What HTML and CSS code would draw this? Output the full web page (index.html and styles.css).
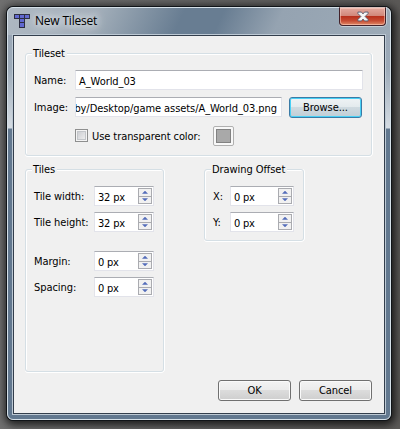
FILE: index.html
```html
<!DOCTYPE html>
<html lang="en">
<head>
<meta charset="utf-8">
<title>New Tileset</title>
<link rel="stylesheet" href="styles.css">
</head>
<body>
<div class="window">
  <header class="titlebar">
    <svg class="app-icon" width="16" height="14" viewBox="0 0 16 14" shape-rendering="crispEdges">
      <path d="M0 0h16v5h-5v9H5V5H0z" fill="#2b2d40"/>
      <path d="M1 1h4v3H1zM6 1h4v3H6zM11 1h4v3h-4zM6 5h4v3H6zM6 9h4v4H6z" fill="#6068d0"/>
    </svg>
    <h1 class="title">New Tileset</h1>
    <button class="close" aria-label="Close">
      <svg width="12" height="11" viewBox="0 0 13 11"><path d="M1 .7h3.8l1.7 2 1.7-2H12v1.6L8.8 5.5 12 8.7v1.6H8.2l-1.7-2-1.7 2H1V8.7l3.2-3.2L1 2.3z" fill="#f5f5f5" stroke="#565b70"/></svg>
    </button>
  </header>
  <main class="client">
    <fieldset class="group tileset">
      <legend>Tileset</legend>
      <div class="row name-row"><label>Name:</label><div class="field">A_World_03</div></div>
      <div class="row image-row"><label>Image:</label><div class="field path"><span>by/Desktop/game assets/A_World_03.png</span></div><button class="button focused">Browse...</button></div>
      <div class="row color-row"><span class="checkbox"></span><span class="check-label">Use transparent color:</span><span class="color-button"><i></i></span></div>
    </fieldset>
    <div class="columns">
      <fieldset class="group tiles">
        <legend>Tiles</legend>
        <div class="row"><label>Tile width:</label><div class="spin"><span>32 px</span><div class="steps"><i class="up"></i><i class="down"></i></div></div></div>
        <div class="row"><label>Tile height:</label><div class="spin"><span>32 px</span><div class="steps"><i class="up"></i><i class="down"></i></div></div></div>
        <div class="row apart"><label>Margin:</label><div class="spin"><span>0 px</span><div class="steps"><i class="up"></i><i class="down"></i></div></div></div>
        <div class="row"><label>Spacing:</label><div class="spin"><span>0 px</span><div class="steps"><i class="up"></i><i class="down"></i></div></div></div>
      </fieldset>
      <fieldset class="group offset">
        <legend>Drawing Offset</legend>
        <div class="row"><label>X:</label><div class="spin"><span>0 px</span><div class="steps"><i class="up"></i><i class="down"></i></div></div></div>
        <div class="row"><label>Y:</label><div class="spin"><span>0 px</span><div class="steps"><i class="up"></i><i class="down"></i></div></div></div>
      </fieldset>
    </div>
    <footer class="actions"><button class="button">OK</button><button class="button">Cancel</button></footer>
  </main>
</div>
</body>
</html>
```

FILE: styles.css
```css
* { box-sizing: border-box; }
body {
  margin: 0;
  padding: 7px 9px 9px 7px;
  width: 400px;
  height: 429px;
  overflow: hidden;
  background: linear-gradient(90deg, #707070, #646464 50%, #5b5957);
  font: 11px/14px "DejaVu Sans Condensed", "DejaVu Sans", sans-serif;
  font-stretch: condensed;
  letter-spacing: -0.07px;
  color: #000;
}
.window {
  width: 384px;
  height: 413px;
  border: 1px solid #d5e0e8;
  border-radius: 6px;
  padding: 0 4px 4px;
  background:
    linear-gradient(180deg, transparent 27px, #9aa7b6 27px, #9caab8 60px, #d5dce3 120px, #62788f 121px),
    linear-gradient(115deg, #aeb8c2 0, #a3afba 23%, #687d92 45%, #687d92 55%, #95a3b1 70%, #9caab7 100%) 0 0 / 100% 28px;
  box-shadow: 0 0 0 1px #101418, 1px 2px 9px 3px rgba(0, 0, 0, .75);
}
.titlebar {
  height: 26px;
  display: flex;
  align-items: flex-start;
}
.app-icon { margin: 6px 0 0 2px; }
.title {
  margin: 5px 0 0 5px;
  font: 12px/16px "Open Sans", sans-serif;
  letter-spacing: -0.2px;
  text-shadow: 0 0 6px #e0e6ea, 0 0 9px #e0e6ea, 0 0 14px #e0e6ea;
}
.close {
  margin: -1px 0 0 auto;
  width: 47px;
  height: 19px;
  padding: 0 0 1px;
  display: flex;
  align-items: center;
  justify-content: center;
  border: 1px solid #43222a;
  border-top-color: #d9c0bc;
  border-radius: 0 0 4px 4px;
  background: linear-gradient(#e3a99e 0, #d08578 48%, #b8311d 50%, #c64b32 75%, #e08a68 100%);
  box-shadow: inset 0 0 0 1px rgba(255, 210, 195, .55), 0 1px 0 #c5ced6, 1px 0 0 #c5ced6;
}
.client {
  width: 374px;
  height: 381px;
  border: 1px solid #bdc9d4;
  background: #f0f0f0;
  box-shadow: inset 0 0 0 1px #333e4c;
  padding: 11px 12px 0;
}
.group {
  position: relative;
  margin: 0;
  padding: 0;
  min-width: 0;
  border: 1px solid #d5dfe5;
  border-radius: 3px;
  box-shadow: inset 1px 1px 0 #fff, 0 1px 0 #fff, 1px 0 0 #fff;
}
.group legend {
  position: absolute;
  left: 6px;
  top: -7px;
  padding: 0 2px 0 1px;
  background: #f0f0f0;
  white-space: nowrap;
}
.row { display: flex; }
label { white-space: nowrap; }
.tileset {
  margin-top: 7px;
  width: 347px;
  height: 103px;
  padding: 16px 0 0 8px;
}
.tileset label { width: 41px; padding-top: 4px; }
.field {
  width: 288px;
  height: 20px;
  border: 1px solid #e2e3ea;
  border-top-color: #abadb3;
  border-radius: 1px;
  background: #fff;
  padding: 4px 3px 0;
  white-space: nowrap;
}
.image-row { margin-top: 7px; }
.path {
  width: 207px;
  display: flex;
  justify-content: flex-end;
  overflow: hidden;
  padding-left: 0;
  padding-right: 4px;
}
.button {
  width: 73px;
  height: 21px;
  padding: 1px 0 0;
  border: 1px solid #707070;
  border-radius: 3px;
  background: linear-gradient(#f3f3f3 0, #ebebeb 48%, #dcdcdc 50%, #cecece 100%);
  box-shadow: inset 0 0 0 1px #fafafa;
  color: #000;
  font: inherit;
  letter-spacing: inherit;
}
.focused {
  margin-left: 7px;
  border-color: #3b7ba6;
  background: linear-gradient(#eff3f5 0, #e3eaed 48%, #cfdae0 50%, #c0ced6 100%);
  box-shadow: inset 0 0 0 1px #48d0f5;
}
.color-row { margin: 8px 0 0 41px; }
.checkbox {
  width: 13px;
  height: 13px;
  margin-top: 3px;
  border: 1px solid #8e8f8f;
  background: linear-gradient(135deg, #c4c6cb, #f5f5f5);
  box-shadow: inset 0 0 0 1px #f4f4f4, inset 0 0 0 2px #c3c6ca;
}
.check-label { width: 121px; padding: 4px 0 0 4px; white-space: nowrap; }
.color-button {
  margin-left: 4px;
  width: 21px;
  height: 20px;
  padding: 2px;
  border: 1px solid #b0b0b0;
  border-radius: 2px;
  background: #f8f8f8;
}
.color-button i {
  display: block;
  width: 15px;
  height: 14px;
  border: 1px solid #828282;
  background: #a9a9a9;
}
.columns { display: flex; gap: 40px; margin-top: 13px; }
.tiles { width: 139px; height: 203px; padding: 16px 0 0 8px; }
.tiles label { width: 60px; padding-top: 4px; }
.offset { width: 100px; height: 72px; padding: 16px 0 0 8px; }
.offset label { width: 17px; padding-top: 4px; }
.offset .spin { width: 64px; }
.columns .row { height: 20px; margin-bottom: 6px; }
.columns .apart { margin-top: 19px; }
.spin {
  width: 60px;
  height: 20px;
  display: flex;
  justify-content: space-between;
  border: 1px solid #e2e3ea;
  border-top-color: #abadb3;
  background: #fff;
  padding: 1px 1px 1px 3px;
}
.spin span { padding-top: 3px; letter-spacing: -0.2px; }
.steps { width: 14px; height: 16px; display: flex; flex-direction: column; }
.steps i {
  height: 9px;
  display: flex;
  align-items: center;
  justify-content: center;
  border: 1px solid #aaabb0;
  background: #f1f1f1;
}
.steps .down { margin-top: -1px; }
.steps i::before {
  content: "";
  width: 6px;
  height: 3px;
  background: #536cba;
  clip-path: polygon(50% 0, 100% 100%, 0 100%);
}
.steps .down::before { clip-path: polygon(0 0, 100% 0, 50% 100%); }
.actions {
  display: flex;
  justify-content: flex-end;
  gap: 8px;
  margin: 8px 0 0;
  width: 347px;
}
```
